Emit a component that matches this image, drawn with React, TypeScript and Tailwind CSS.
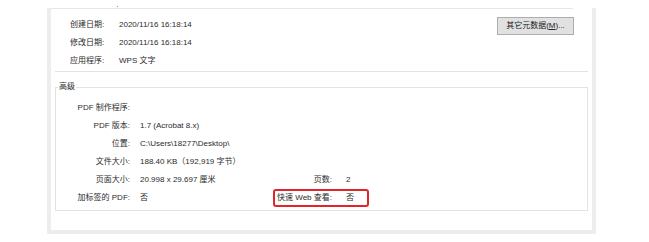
import React from "react";

const font = { fontFamily: '"Liberation Sans", "Noto Sans CJK SC", sans-serif' };

const topRows = [
  { label: "创建日期:", value: "2020/11/16 16:18:14" },
  { label: "修改日期:", value: "2020/11/16 16:18:14" },
  { label: "应用程序:", value: "WPS 文字" },
];

const AdvRow = ({
  label,
  value,
  side,
  boxed,
}: {
  label: string;
  value?: string;
  side?: { label: string; value: string };
  boxed?: boolean;
}) => (
  <div className="flex h-[18px] items-center">
    <span className="w-[74px] text-right whitespace-nowrap">{label}</span>
    <span className="ml-[10px] w-[133px] whitespace-nowrap">{value}</span>
    {side && (
      <div
        className={
          "flex h-[18px] w-[96px] items-center rounded-[3px] border-2 " +
          (boxed ? "border-[#e0252b]" : "border-transparent")
        }
      >
        <span className="w-[57px] text-right whitespace-nowrap">{side.label}</span>
        <span className="ml-[14px]">{side.value}</span>
      </div>
    )}
  </div>
);

export default function App() {
  return (
    <div className="h-[242px] w-full bg-white text-[8px] text-[#2b2b2b]" style={font}>
      <div className="ml-[47px] h-[226px] w-[549px] border-x-4 border-b-4 border-[#ededed] bg-white">
        {/* top divider (previous section cut off) */}
        <div className="relative mt-[8px] mr-[19px] h-px bg-[#e6e6e6]">
          <span className="absolute left-[66px] -top-[2px] h-px w-px bg-[#999]" />
        </div>

        {/* dates */}
        <div className="flex pt-[7px] pl-[19px] pr-[18px]">
          <div className="flex-1">
            {topRows.map((r) => (
              <div key={r.label} className="flex h-[18px] items-center">
                <span className="w-[49px] whitespace-nowrap">{r.label}</span>
                <span className="whitespace-nowrap">{r.value}</span>
              </div>
            ))}
          </div>
          <button className="mt-[1px] h-[18px] w-[77px] border border-[#adadad] bg-[#e1e1e1] text-[8px] text-[#222]">
            其它元数据(<span className="underline">M</span>)...
          </button>
        </div>

        <div className="mx-[4px] mt-[1px] h-px bg-[#e3e3e3]" />

        {/* advanced group */}
        <fieldset className="mx-[4px] mt-[10px] border border-[#e3e3e3] pb-[3px] pt-[7px]">
          <legend className="ml-[2px] px-px leading-[10px]">高级</legend>
          <AdvRow label="PDF 制作程序:" />
          <AdvRow label="PDF 版本:" value="1.7 (Acrobat 8.x)" />
          <AdvRow label="位置:" value="C:\Users\18277\Desktop\" />
          <AdvRow label="文件大小:" value="188.40 KB（192,919 字节）" />
          <AdvRow
            label="页面大小:"
            value="20.998 x 29.697 厘米"
            side={{ label: "页数:", value: "2" }}
          />
          <AdvRow
            label="加标签的 PDF:"
            value="否"
            side={{ label: "快速 Web 查看:", value: "否" }}
            boxed
          />
        </fieldset>
      </div>
    </div>
  );
}
